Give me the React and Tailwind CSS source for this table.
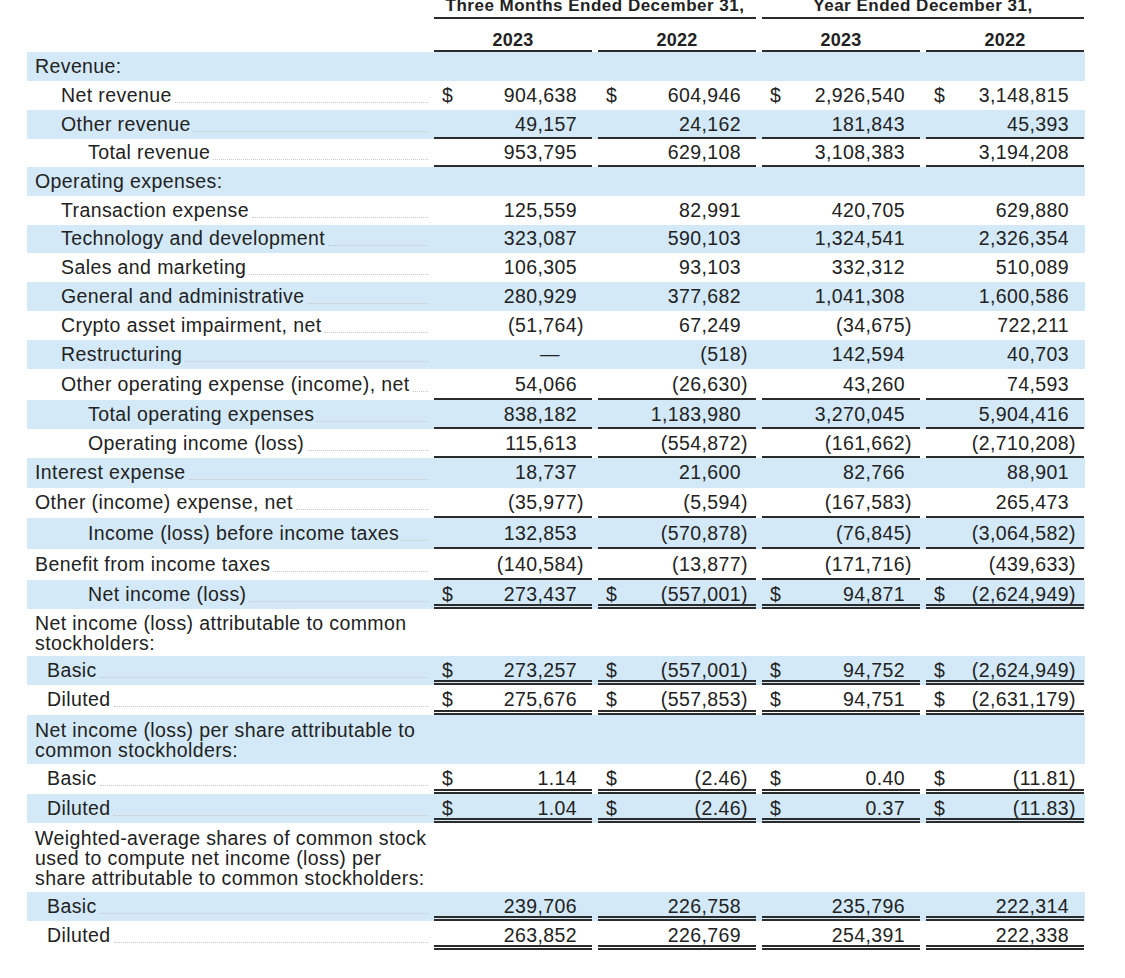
import React from "react";

const rows = [
  { label: "Revenue:", indent: 0, band: true, h: "h-[29px]" },
  { label: "Net revenue", indent: 1, h: "h-[29px]", vals: ["$904,638", "$604,946", "$2,926,540", "$3,148,815"] },
  { label: "Other revenue", indent: 1, band: true, h: "h-[29px]", vals: ["49,157", "24,162", "181,843", "45,393"], line: "single" },
  { label: "Total revenue", indent: 2, h: "h-[28px]", vals: ["953,795", "629,108", "3,108,383", "3,194,208"], line: "single" },
  { label: "Operating expenses:", indent: 0, band: true, h: "h-[29px]" },
  { label: "Transaction expense", indent: 1, h: "h-[29px]", vals: ["125,559", "82,991", "420,705", "629,880"] },
  { label: "Technology and development", indent: 1, band: true, h: "h-[28px]", vals: ["323,087", "590,103", "1,324,541", "2,326,354"] },
  { label: "Sales and marketing", indent: 1, h: "h-[29px]", vals: ["106,305", "93,103", "332,312", "510,089"] },
  { label: "General and administrative", indent: 1, band: true, h: "h-[29px]", vals: ["280,929", "377,682", "1,041,308", "1,600,586"] },
  { label: "Crypto asset impairment, net", indent: 1, h: "h-[29px]", vals: ["(51,764)", "67,249", "(34,675)", "722,211"] },
  { label: "Restructuring", indent: 1, band: true, h: "h-[29px]", vals: ["—", "(518)", "142,594", "40,703"] },
  { label: "Other operating expense (income), net", indent: 1, h: "h-[31px]", vals: ["54,066", "(26,630)", "43,260", "74,593"], line: "single" },
  { label: "Total operating expenses", indent: 2, band: true, h: "h-[29px]", vals: ["838,182", "1,183,980", "3,270,045", "5,904,416"], line: "single" },
  { label: "Operating income (loss)", indent: 2, h: "h-[29px]", vals: ["115,613", "(554,872)", "(161,662)", "(2,710,208)"], line: "single" },
  { label: "Interest expense", indent: 0, band: true, h: "h-[30px]", vals: ["18,737", "21,600", "82,766", "88,901"] },
  { label: "Other (income) expense, net", indent: 0, h: "h-[30px]", vals: ["(35,977)", "(5,594)", "(167,583)", "265,473"], line: "single" },
  { label: "Income (loss) before income taxes", indent: 2, band: true, h: "h-[31px]", vals: ["132,853", "(570,878)", "(76,845)", "(3,064,582)"], line: "single" },
  { label: "Benefit from income taxes", indent: 0, h: "h-[31px]", vals: ["(140,584)", "(13,877)", "(171,716)", "(439,633)"], line: "single" },
  { label: "Net income (loss)", indent: 2, band: true, h: "h-[29px]", vals: ["$273,437", "$(557,001)", "$94,871", "$(2,624,949)"], line: "double" },
  { lines: ["Net income (loss) attributable to common", "stockholders:"], indent: 0, h: "h-[47px]" },
  { label: "Basic", indent: 3, band: true, h: "h-[29px]", vals: ["$273,257", "$(557,001)", "$94,752", "$(2,624,949)"], line: "double" },
  { label: "Diluted", indent: 3, h: "h-[30px]", vals: ["$275,676", "$(557,853)", "$94,751", "$(2,631,179)"], line: "double" },
  { lines: ["Net income (loss) per share attributable to", "common stockholders:"], indent: 0, band: true, h: "h-[49px]" },
  { label: "Basic", indent: 3, h: "h-[30px]", vals: ["$1.14", "$(2.46)", "$0.40", "$(11.81)"], line: "double" },
  { label: "Diluted", indent: 3, band: true, h: "h-[29px]", vals: ["$1.04", "$(2.46)", "$0.37", "$(11.83)"], line: "double" },
  { lines: ["Weighted-average shares of common stock", "used to compute net income (loss) per", "share attributable to common stockholders:"], indent: 0, h: "h-[69px]" },
  { label: "Basic", indent: 3, band: true, h: "h-[29px]", vals: ["239,706", "226,758", "235,796", "222,314"], line: "double" },
  { label: "Diluted", indent: 3, h: "h-[29px]", vals: ["263,852", "226,769", "254,391", "222,338"], line: "double" },
];

const indents = ["pl-[8px]", "pl-[34px]", "pl-[61px]", "pl-[20px]"];

const lineFor = (line, band) => {
  if (line === "single") return "shadow-[inset_0_-2px_0_#2b2b2b]";
  if (line === "double")
    return band
      ? "shadow-[inset_0_-2px_0_#2b2b2b,inset_0_-3px_0_#d3e9f8,inset_0_-5px_0_#2b2b2b]"
      : "shadow-[inset_0_-2px_0_#2b2b2b,inset_0_-3px_0_#ffffff,inset_0_-5px_0_#2b2b2b]";
  return "";
};

function Amount({ value, line, band }) {
  let v = value || "";
  let dollar = false;
  if (v.startsWith("$")) {
    dollar = true;
    v = v.slice(1);
  }
  const paren = v.endsWith(")") ? ")" : "";
  const main = paren ? v.slice(0, -1) : v;

  return (
    <div className={`flex w-[158px] items-center pl-[8px] pr-[8px] ${lineFor(line, band)}`}>
      <span className="w-[12px]">{dollar ? "$" : ""}</span>
      <span className={`flex-1 text-right ${main === "—" ? "pr-[17px]" : ""}`}>{main}</span>
      <span className="w-[7px]">{paren}</span>
    </div>
  );
}

function Row({ row }) {
  const bg = row.band ? "bg-[#d3e9f8]" : "bg-white";

  return (
    <div className={`flex gap-[6px] ${row.h} ${bg}`}>
      <div className={`-mr-[6px] flex w-[407px] items-center pr-[6px] ${indents[row.indent]}`}>
        {row.lines ? (
          <div className="whitespace-nowrap leading-[20px]">
            {row.lines.map((l) => (
              <div key={l}>{l}</div>
            ))}
          </div>
        ) : (
          <>
            <span className="whitespace-nowrap">{row.label}</span>
            {row.vals && <span className="mt-[13px] ml-[3px] h-0 flex-1 border-b border-dotted border-[#c6c6c6]" />}
          </>
        )}
      </div>
      {row.vals ? (
        row.vals.map((v, i) => <Amount key={i} value={v} line={row.line} band={row.band} />)
      ) : null}
    </div>
  );
}

export default function App() {
  return (
    <div className="min-h-screen bg-white font-['Liberation_Sans',Arial,sans-serif] text-[19.5px] tracking-[0.4px] text-[#222]">
      <div className="ml-[27px] w-[1058px]">
        {/* period headers */}
        <div className="flex h-[19px] gap-[6px]">
          <div className="w-[401px]" />
          <div className="flex w-[322px] items-end justify-center pb-[5px] text-[17px] leading-[17px] font-bold tracking-[0.5px] shadow-[inset_0_-2px_0_#2b2b2b]">
            Three Months Ended December 31,
          </div>
          <div className="flex w-[322px] items-end justify-center pb-[5px] text-[17px] leading-[17px] font-bold tracking-[0.5px] shadow-[inset_0_-2px_0_#2b2b2b]">
            Year Ended December 31,
          </div>
        </div>

        {/* years */}
        <div className="flex h-[33px] gap-[6px]">
          <div className="w-[401px]" />
          {["2023", "2022", "2023", "2022"].map((y, i) => (
            <div
              key={i}
              className="flex w-[158px] items-end justify-center pb-[3px] text-[18px] leading-[18px] font-bold tracking-[0.3px] shadow-[inset_0_-2px_0_#2b2b2b]"
            >
              {y}
            </div>
          ))}
        </div>

        {rows.map((r, i) => (
          <Row key={i} row={r} />
        ))}
      </div>
    </div>
  );
}
